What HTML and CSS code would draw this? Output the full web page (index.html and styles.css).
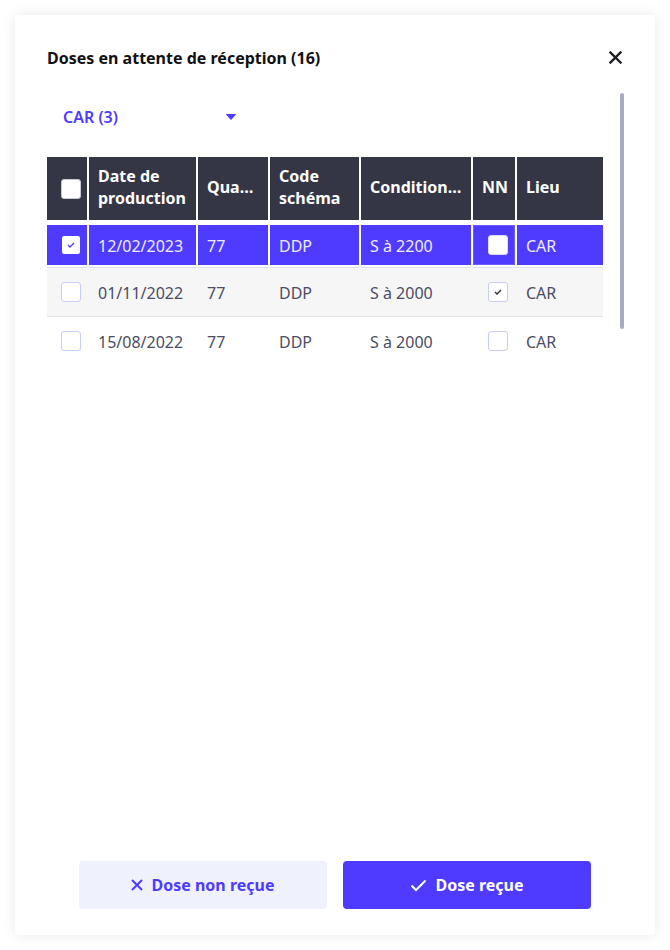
FILE: index.html
```html
<!DOCTYPE html>
<html lang="fr">
<head>
<meta charset="utf-8">
<link rel="stylesheet" href="styles.css">
</head>
<body>
<div class="card">
  <div class="card-head">
    <h1 class="title">Doses en attente de réception (16)</h1>
    <button class="close" aria-label="Fermer">
      <svg width="13" height="13" viewBox="0 0 13 13"><path d="M1.5 1.5 L11.5 11.5 M11.5 1.5 L1.5 11.5" stroke="#1e1e22" stroke-width="2.4" stroke-linecap="square"/></svg>
    </button>
  </div>
  <div class="card-body">
    <div class="scroll-thumb"></div>
    <div class="dropdown">
      <span>CAR (3)</span>
      <svg width="10" height="6" viewBox="0 0 10 6"><path d="M0.5 0.5 H9.5 L5 5.5 Z" fill="#4e3bff" stroke="#4e3bff" stroke-linejoin="round"/></svg>
    </div>
    <div class="table">
      <div class="row head">
        <div class="cell cb-cell"><span class="cb head-cb"></span></div>
        <div class="cell">Date de production</div>
        <div class="cell"><span class="ell">Quantité</span></div>
        <div class="cell">Code schéma</div>
        <div class="cell"><span class="ell">Conditionnement</span></div>
        <div class="cell">NN</div>
        <div class="cell">Lieu</div>
      </div>
      <div class="row-wrap sel-wrap">
        <div class="row selected">
          <div class="cell cb-cell"><span class="cb sel-cb"><svg width="10" height="8" viewBox="0 0 10 8"><path d="M2 4 L4 6 L8 2" fill="none" stroke="#4e3bff" stroke-width="1.3"/></svg></span></div>
          <div class="cell">12/02/2023</div>
          <div class="cell">77</div>
          <div class="cell">DDP</div>
          <div class="cell">S à 2200</div>
          <div class="cell nn-cell nn-sel"><span class="cb sel-nn"></span></div>
          <div class="cell">CAR</div>
        </div>
      </div>
      <div class="row-wrap alt">
        <div class="row">
          <div class="cell cb-cell"><span class="cb"></span></div>
          <div class="cell">01/11/2022</div>
          <div class="cell">77</div>
          <div class="cell">DDP</div>
          <div class="cell">S à 2000</div>
          <div class="cell nn-cell"><span class="cb"><svg width="10" height="8" viewBox="0 0 10 8"><path d="M2 4 L4 6 L8 2" fill="none" stroke="#2c2c34" stroke-width="1.3"/></svg></span></div>
          <div class="cell">CAR</div>
        </div>
      </div>
      <div class="row-wrap last">
        <div class="row">
          <div class="cell cb-cell"><span class="cb"></span></div>
          <div class="cell">15/08/2022</div>
          <div class="cell">77</div>
          <div class="cell">DDP</div>
          <div class="cell">S à 2000</div>
          <div class="cell nn-cell"><span class="cb"></span></div>
          <div class="cell">CAR</div>
        </div>
      </div>
    </div>
  </div>
  <div class="card-foot">
    <button class="btn btn-secondary">
      <svg width="12" height="12" viewBox="0 0 12 12"><path d="M1 1 L11 11 M11 1 L1 11" stroke="#4e3bff" stroke-width="2"/></svg>
      <span>Dose non reçue</span>
    </button>
    <button class="btn btn-primary">
      <svg width="17" height="13" viewBox="0 0 17 13"><path d="M1.5 6.5 L6 11 L15.5 1.5" fill="none" stroke="#ffffff" stroke-width="2"/></svg>
      <span>Dose reçue</span>
    </button>
  </div>
</div>
</body>
</html>
```

FILE: styles.css
```css
* { box-sizing: border-box; }
html, body { margin: 0; padding: 0; }
body {
  width: 670px;
  height: 950px;
  background: #ffffff;
  font-family: "Noto Sans", "Open Sans", sans-serif;
  padding: 15px;
}
.card {
  width: 640px;
  height: 920px;
  background: #fff;
  border-radius: 4px;
  box-shadow: 0 0 14px rgba(0, 0, 0, 0.09);
  display: flex;
  flex-direction: column;
  padding: 32px 32px 26px 32px;
}
.card-head {
  display: flex;
  justify-content: space-between;
  align-items: center;
  height: 22px;
}
.title {
  margin: 0;
  font-size: 16px;
  font-weight: 700;
  color: #111114;
  line-height: 22px;
}
.close {
  border: 0;
  background: none;
  padding: 0;
  width: 13px;
  height: 13px;
  margin-right: 1px;
  margin-top: -1px;
  display: flex;
}
.card-body {
  flex: 1;
  position: relative;
  margin-top: 24px;
}
.scroll-thumb {
  position: absolute;
  left: 573px;
  top: 0;
  width: 4px;
  height: 236px;
  border-radius: 2px;
  background: #a9abbf;
}
.dropdown {
  width: 200px;
  height: 48px;
  display: flex;
  align-items: center;
  justify-content: space-between;
  padding: 0 11px 0 16px;
  color: #4e3bff;
  font-size: 16px;
  font-weight: 600;
}
.table {
  width: 556px;
  margin-top: 16px;
  font-size: 16px;
}
.row {
  display: grid;
  grid-template-columns: 40px 107px 70px 89px 110px 42px 86px;
  column-gap: 2px;
}
.cell {
  padding: 0 9px;
  display: flex;
  align-items: center;
  overflow: hidden;
  min-width: 0;
}
.head {
  height: 63px;
}
.head .cell {
  background: #343646;
  color: #ffffff;
  font-weight: 700;
  line-height: 22px;
  padding-bottom: 3px;
}
.row-wrap .cell { padding-top: 2px; }
.ell {
  white-space: nowrap;
  overflow: hidden;
  text-overflow: ellipsis;
  display: block;
  min-width: 0;
}
.head .cb-cell { padding: 0 0 0 14px; }
.row-wrap .cb-cell { padding: 0 0 0 14px; }
.row-wrap .nn-cell { padding: 0 0 0 15px; }
.cb {
  width: 20px;
  height: 20px;
  border-radius: 3px;
  background: #fff;
  border: 1px solid #c9ccf6;
  display: flex;
  align-items: center;
  justify-content: center;
  flex: none;
}
.head-cb { border-color: #c8cad6; }
.sel-cb {
  width: 18px;
  height: 18px;
  margin-left: 1px;
  border: 0;
  border-radius: 2px;
}
.sel-nn { border-color: #dcdcff; }
.row-wrap {
  border-bottom: 1px solid #e3e3ec;
}
.row-wrap .row { height: 48px; color: #4b4d63; }
.sel-wrap { padding: 5px 0 2px; }
.sel-wrap .row.selected { height: 40px; }
.selected .cell {
  background: #4e3bff;
  color: #efedff;
}
.nn-sel { box-shadow: inset 0 0 0 1px #6c5cff; }
.alt { background: #f6f6f7; }
.last { border-bottom: 0; }
.card-foot {
  display: flex;
  justify-content: center;
  gap: 16px;
}
.btn {
  width: 248px;
  height: 48px;
  border: 0;
  border-radius: 4px;
  display: flex;
  align-items: center;
  justify-content: center;
  gap: 8px;
  font-family: "Noto Sans", "Open Sans", sans-serif;
  font-size: 16px;
  font-weight: 700;
}
.btn-secondary { background: #eff1fd; color: #4e3bff; }
.btn-primary { background: #4e3bff; color: #ffffff; }
```
